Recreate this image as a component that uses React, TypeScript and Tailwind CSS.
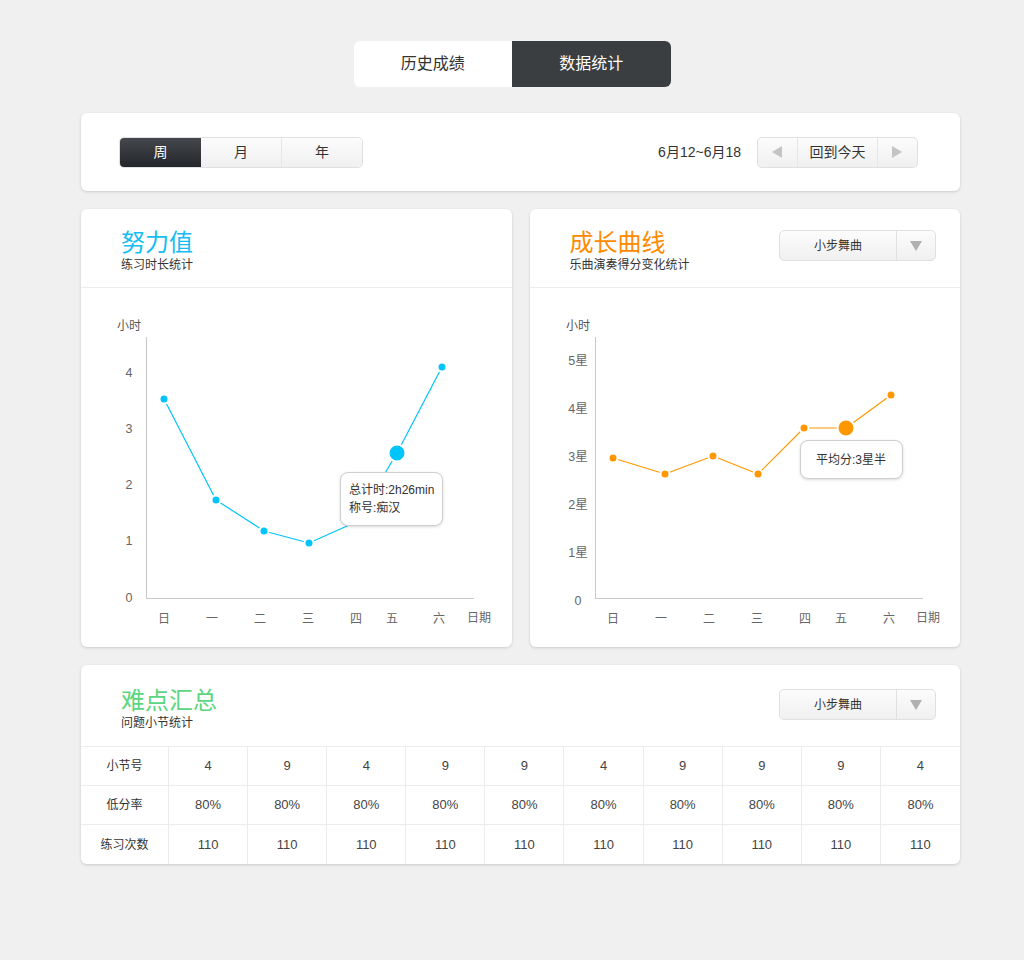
import * as React from 'react';

// ── Data ──
const WEEK = ['日', '一', '二', '三', '四', '五', '六'];

const EFFORT_POINTS: [number, number][] = [
  [83, 111], [135, 212], [183, 243], [228, 255], [275, 234], [316, 165], [361, 79],
];
const GROWTH_POINTS: [number, number][] = [
  [83, 170], [135, 186], [183, 168], [228, 186], [274, 140], [316, 140], [361, 107],
];

const EFFORT_X = [83, 131, 179, 227, 275, 311, 358];
const GROWTH_X = [83, 131, 179, 227, 275, 311, 359];

const SECTIONS = [4, 9, 4, 9, 9, 4, 9, 9, 9, 4];

function Triangle({ dir, className }: { dir: 'left' | 'right' | 'down'; className?: string }) {
  const pts =
    dir === 'left' ? '11,1 11,13 1,7' : dir === 'right' ? '1,1 1,13 11,7' : '1,2 13,2 7,12';
  return (
    <svg width="14" height="14" viewBox="0 0 14 14" className={className}>
      <polygon points={pts} fill="currentColor" />
    </svg>
  );
}

function Dropdown({ label }: { label: string }) {
  return (
    <div className="flex h-[31px] w-[157px] overflow-hidden rounded-[5px] border border-[#e0e0e0] bg-gradient-to-b from-[#fcfcfc] to-[#f0f0f0] text-[12px] text-[#333]">
      <div className="flex flex-1 items-center justify-center">{label}</div>
      <div className="flex w-[39px] items-center justify-center border-l border-[#e0e0e0] text-[#b0b0b0]">
        <Triangle dir="down" />
      </div>
    </div>
  );
}

function CardHeader({
  title,
  subtitle,
  color,
  right,
  tall,
}: {
  title: string;
  subtitle: string;
  color: string;
  right?: React.ReactNode;
  tall?: boolean;
}) {
  return (
    <div
      className={
        'flex items-start justify-between border-b border-[#ececec] pl-10 pr-6 ' +
        (tall ? 'pt-[22px] pb-[15px]' : 'pt-5 pb-[14px]')
      }
    >
      <div>
        <div className={'text-[24px] leading-7 ' + color}>{title}</div>
        <div className="text-[12px] leading-4 text-[#333]">{subtitle}</div>
      </div>
      {right && <div className="pt-px">{right}</div>}
    </div>
  );
}

function LineChart({
  points,
  color,
  yLabels,
  xPos,
  bigIndex,
}: {
  points: [number, number][];
  color: string;
  yLabels: { t: string; y: number }[];
  xPos: number[];
  bigIndex: number;
}) {
  const d = points.map((p, i) => (i === 0 ? 'M' : 'L') + p[0] + ' ' + p[1]).join(' ');
  return (
    <svg width="430" height="359" viewBox="0 0 430 359" className="block">
      <text x="36" y="42" fontSize="12" fill="#555">小时</text>
      <line x1="65.5" y1="49" x2="65.5" y2="310" stroke="#c8c8c8" />
      <line x1="65" y1="310.5" x2="393" y2="310.5" stroke="#c8c8c8" />
      {yLabels.map((l) => (
        <text key={l.t} x="48" y={l.y + 4.5} fontSize="12.5" fill="#666" textAnchor="middle">
          {l.t}
        </text>
      ))}
      {WEEK.map((w, i) => (
        <text key={w} x={xPos[i]} y="335" fontSize="12" fill="#666" textAnchor="middle">
          {w}
        </text>
      ))}
      <text x="386" y="334" fontSize="12" fill="#666">日期</text>
      <path d={d} fill="none" stroke={color} strokeWidth="1.2" strokeLinejoin="round" />
      {points.map((p, i) => (
        <circle
          key={i}
          cx={p[0]}
          cy={p[1]}
          r={i === bigIndex ? 8.5 : 4.5}
          fill={color}
          stroke="#fff"
          strokeWidth="2"
        />
      ))}
    </svg>
  );
}

export default function App() {
  return (
    <div className="min-h-[960px] bg-[#f0f0f0] pt-[41px] font-['Liberation_Sans','Noto_Sans_CJK_SC',sans-serif] text-[#333]">
      {/* Top tabs */}
      <div className="flex justify-center">
        <div className="flex h-[46px] w-[317px] overflow-hidden rounded-[6px] text-[16px]">
          <div className="flex flex-1 items-center justify-center bg-white text-[#333]">历史成绩</div>
          <div className="flex flex-1 items-center justify-center bg-[#3b3e41] text-white">数据统计</div>
        </div>
      </div>

      <div className="ml-[81px] mt-[26px] flex w-[879px] flex-col gap-[18px]">
        {/* Filter bar */}
        <div className="flex h-[78px] items-center justify-between rounded-[6px] bg-white pl-[38px] pr-[42px] shadow-[0_1px_3px_rgba(0,0,0,0.16)]">
          <div className="flex h-[31px] w-[244px] overflow-hidden rounded-[5px] border border-[#e0e0e0] text-[14px]">
            <div className="flex w-[81px] items-center justify-center bg-gradient-to-b from-[#45484c] to-[#23262a] text-white">周</div>
            <div className="flex flex-1 items-center justify-center border-r border-[#e6e6e6] bg-gradient-to-b from-[#fcfcfc] to-[#f0f0f0]">月</div>
            <div className="flex flex-1 items-center justify-center bg-gradient-to-b from-[#fcfcfc] to-[#f0f0f0]">年</div>
          </div>
          <div className="flex items-center gap-4">
            <div className="text-[14px] text-[#333]">6月12~6月18</div>
            <div className="flex h-[31px] w-[161px] overflow-hidden rounded-[5px] border border-[#e0e0e0] bg-gradient-to-b from-[#fcfcfc] to-[#f0f0f0] text-[14px]">
              <div className="flex w-[40px] items-center justify-center border-r border-[#e6e6e6] text-[#c4c4c4]">
                <Triangle dir="left" />
              </div>
              <div className="flex flex-1 items-center justify-center">回到今天</div>
              <div className="flex w-[40px] items-center justify-center border-l border-[#e6e6e6] text-[#c4c4c4]">
                <Triangle dir="right" />
              </div>
            </div>
          </div>
        </div>

        {/* Charts */}
        <div className="grid grid-cols-2 gap-[18px]">
          <div className="h-[438px] overflow-hidden rounded-[6px] bg-white shadow-[0_1px_3px_rgba(0,0,0,0.16)]">
            <CardHeader title="努力值" subtitle="练习时长统计" color="text-[#14bdf2]" />
            <div className="relative">
              <LineChart
                points={EFFORT_POINTS}
                color="#00c4fa"
                xPos={EFFORT_X}
                bigIndex={5}
                yLabels={[
                  { t: '4', y: 84 },
                  { t: '3', y: 140 },
                  { t: '2', y: 196 },
                  { t: '1', y: 252 },
                  { t: '0', y: 309 },
                ]}
              />
              <div className="absolute left-[259px] top-[184px] flex h-[54px] w-[103px] flex-col justify-center rounded-[8px] border border-[#cfcfcf] bg-white pl-[8px] text-[12px] leading-[18px] text-[#333] shadow-[0_1px_3px_rgba(0,0,0,0.15)]">
                <div>总计时:2h26min</div>
                <div>称号:痴汉</div>
              </div>
            </div>
          </div>

          <div className="h-[438px] overflow-hidden rounded-[6px] bg-white shadow-[0_1px_3px_rgba(0,0,0,0.16)]">
            <CardHeader
              title="成长曲线"
              subtitle="乐曲演奏得分变化统计"
              color="text-[#ff8a00]"
              right={<Dropdown label="小步舞曲" />}
            />
            <div className="relative">
              <LineChart
                points={GROWTH_POINTS}
                color="#ff9800"
                xPos={GROWTH_X}
                bigIndex={5}
                yLabels={[
                  { t: '5星', y: 72 },
                  { t: '4星', y: 120 },
                  { t: '3星', y: 168 },
                  { t: '2星', y: 216 },
                  { t: '1星', y: 264 },
                  { t: '0', y: 312 },
                ]}
              />
              <div className="absolute left-[270px] top-[152px] flex h-[39px] w-[103px] items-center justify-center rounded-[8px] border border-[#cfcfcf] bg-white text-[12px] text-[#333] shadow-[0_1px_3px_rgba(0,0,0,0.15)]">
                平均分:3星半
              </div>
            </div>
          </div>
        </div>

        {/* Difficulty summary */}
        <div className="overflow-hidden rounded-[6px] bg-white shadow-[0_1px_3px_rgba(0,0,0,0.16)]">
          <CardHeader
            title="难点汇总"
            subtitle="问题小节统计"
            color="text-[#5cd67e]"
            right={<div className="pt-px"><Dropdown label="小步舞曲" /></div>}
            tall
          />
          <div className="grid grid-cols-[88px_repeat(10,1fr)] text-center text-[12px] text-[#333]">
            {[
              { label: '小节号', values: SECTIONS.map(String) },
              { label: '低分率', values: SECTIONS.map(() => '80%') },
              { label: '练习次数', values: SECTIONS.map(() => '110') },
            ].map((row, r) => (
              <React.Fragment key={row.label}>
                <div className={'flex h-[39px] items-center justify-center border-r border-[#ececec] ' + (r < 2 ? 'border-b' : '')}>
                  {row.label}
                </div>
                {row.values.map((v, i) => (
                  <div
                    key={i}
                    className={
                      'flex h-[39px] items-center justify-center text-[13px] text-[#444] border-[#ececec] ' +
                      (i < 9 ? 'border-r ' : '') +
                      (r < 2 ? 'border-b' : '')
                    }
                  >
                    {v}
                  </div>
                ))}
              </React.Fragment>
            ))}
          </div>
        </div>
      </div>
    </div>
  );
}
